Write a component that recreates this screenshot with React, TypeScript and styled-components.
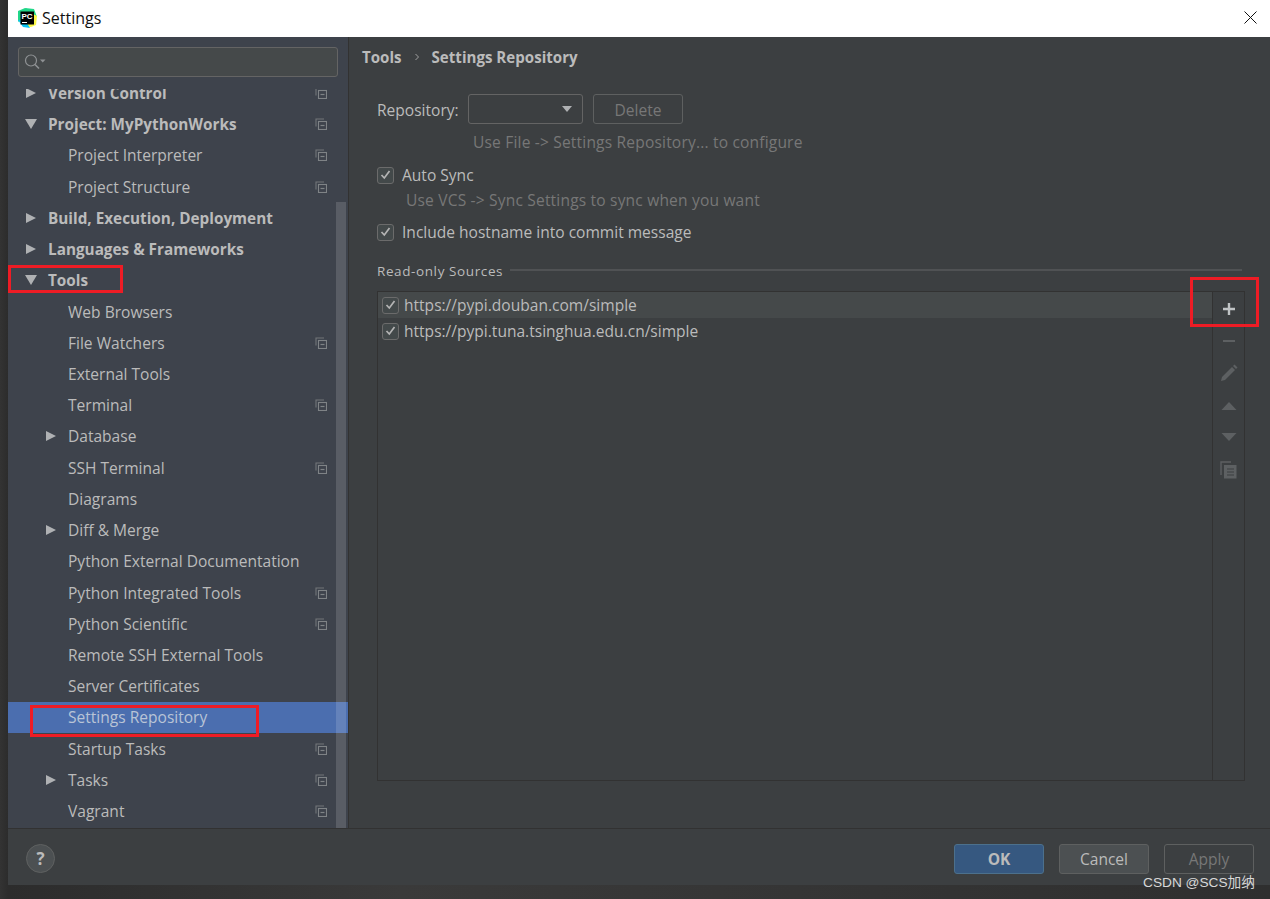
import React from 'react'
import styled, { createGlobalStyle } from 'styled-components'

const GlobalStyle = createGlobalStyle`
    html, body {
        margin: 0;
        padding: 0;
        background: #2e2e2e;
        font-family: "Open Sans", "Noto Sans", sans-serif;
    }
`

const Page = styled.div`
    position: relative;
    width: 1270px;
    height: 899px;
    overflow: hidden;
    padding-left: 8px;
    box-sizing: border-box;
    background: linear-gradient(90deg, #333 0, #2c2c2c 8px, #3a3a3a 400px, #2f2f2f 100%);
`

const Window = styled.div`
    display: flex;
    flex-direction: column;
    height: 885px;
    background: #3c3f41;
`

const TitleBar = styled.div`
    display: flex;
    align-items: center;
    height: 37px;
    flex: none;
    padding: 0 13px 2px 9px;
    box-sizing: border-box;
    background: #fff;
    color: #111;
    font-size: 16px;
`

const TitleText = styled.span`
    margin-left: 5px;
    flex: 1;
`

const Main = styled.div`
    display: flex;
    flex: 1;
    min-height: 0;
`

const Sidebar = styled.div`
    position: relative;
    width: 340px;
    flex: none;
    display: flex;
    flex-direction: column;
    background: #3e434c;
    border-bottom: 1px solid #323232;
`

const SearchBox = styled.div`
    display: flex;
    align-items: center;
    height: 28px;
    margin: 10px 10px 12px 10px;
    padding-left: 5px;
    flex: none;
    background: #45494a;
    border: 1px solid #646464;
    border-radius: 3px;
`

const Tree = styled.div`
    flex: 1;
    overflow: hidden;
`

const TreeInner = styled.div`
    margin-top: -11.6px;
`

const Row = styled.div<{ $selected?: boolean; $bold?: boolean; $depth: number }>`
    display: flex;
    align-items: center;
    height: 31.22px;
    padding-left: ${({ $depth }) => ($depth === 0 ? 40 : 60)}px;
    padding-right: 21px;
    background: ${({ $selected }) => ($selected ? '#4b6eaf' : 'transparent')};
    color: ${({ $selected }) => ($selected ? '#b9c4d6' : '#bbbbbb')};
    font-size: ${({ $bold }) => ($bold ? 15.3 : 15.55)}px;
    font-weight: ${({ $bold }) => ($bold ? 700 : 400)};
    position: relative;
    white-space: nowrap;
`

const RowLabel = styled.span`
    flex: 1;
`

const Arrow = styled.span<{ $open?: boolean; $depth: number }>`
    position: absolute;
    left: ${({ $depth }) => ($depth === 0 ? 18 : 38)}px;
    top: 50%;
    transform: translateY(-50%);
    width: 0;
    height: 0;
    ${({ $open }) =>
        $open
            ? `
        margin-left: -1px;
        border-left: 6px solid transparent;
        border-right: 6px solid transparent;
        border-top: 10px solid #afb1b3;
    `
            : `
        border-top: 5.5px solid transparent;
        border-bottom: 5.5px solid transparent;
        border-left: 10px solid #afb1b3;
    `}
`

const ScrollThumb = styled.div`
    position: absolute;
    right: 2px;
    top: 165px;
    bottom: 0;
    width: 10px;
    background: rgba(255, 255, 255, 0.14);
`

const Content = styled.div`
    flex: 1;
    display: flex;
    flex-direction: column;
    padding: 0 25px 0 13px;
    border-left: 1px solid #323232;
    border-bottom: 1px solid #323232;
    min-width: 0;
`

const Breadcrumb = styled.div`
    display: flex;
    align-items: center;
    height: 20px;
    margin-top: 10px;
    color: #bbbbbb;
    font-size: 15.1px;
    font-weight: 700;
`

const Chevron = styled.span`
    margin: 0 12px 0 12px;
    display: flex;
`

const Form = styled.div`
    padding-left: 15px;
    margin-top: 27px;
`

const RepoRow = styled.div`
    display: flex;
    align-items: center;
    height: 30px;
    color: #bbbbbb;
    font-size: 15.55px;
`

const RepoLabel = styled.span`
    width: 91px;
    flex: none;
    padding-top: 2px;
`

const Combo = styled.div`
    width: 115px;
    height: 30px;
    box-sizing: border-box;
    border: 1px solid #646464;
    border-radius: 3px;
    display: flex;
    align-items: center;
    justify-content: flex-end;
    padding-right: 10px;
`

const ComboCaret = styled.span`
    width: 0;
    height: 0;
    border-left: 5.5px solid transparent;
    border-right: 5.5px solid transparent;
    border-top: 6px solid #afb1b3;
`

const GhostButton = styled.div`
    width: 90px;
    height: 30px;
    margin-left: 10px;
    padding-top: 2px;
    box-sizing: border-box;
    border: 1px solid #5e6060;
    border-radius: 3px;
    display: flex;
    align-items: center;
    justify-content: center;
    color: #777777;
`

const Hint = styled.div<{ $indent: number; $top: number }>`
    margin-left: ${({ $indent }) => $indent}px;
    margin-top: ${({ $top }) => $top}px;
    height: 20px;
    line-height: 20px;
    color: #777777;
    font-size: 15.55px;
    letter-spacing: 0.18px;
    white-space: nowrap;
`

const CheckRow = styled.div<{ $top: number }>`
    display: flex;
    align-items: center;
    gap: 8px;
    height: 20px;
    margin-top: ${({ $top }) => $top}px;
    color: #bbbbbb;
    font-size: 15.55px;
`

const CheckBox = styled.span`
    width: 17px;
    height: 17px;
    flex: none;
    box-sizing: border-box;
    border: 1px solid #6b6b6b;
    border-radius: 3px;
    background: #43494a;
    display: flex;
    align-items: center;
    justify-content: center;
`

const SectionTitle = styled.div`
    display: flex;
    align-items: center;
    height: 20px;
    margin-top: 19px;
    color: #bbbbbb;
    font-size: 13.5px;
    letter-spacing: 0.6px;
    white-space: nowrap;
`

const SectionRule = styled.div`
    flex: 1;
    height: 2px;
    margin: 0 3px 2px 7px;
    background: #505254;
`

const ListPanel = styled.div`
    display: flex;
    height: 490px;
    margin-top: 10px;
    box-sizing: border-box;
    border: 1px solid #323232;
`

const SourceList = styled.div`
    flex: 1;
    min-width: 0;
`

const SourceRow = styled.div<{ $active?: boolean }>`
    display: flex;
    align-items: center;
    gap: 5px;
    height: 26px;
    padding-left: 4px;
    background: ${({ $active }) => ($active ? '#45494a' : 'transparent')};
    color: #bbbbbb;
    font-size: 15.55px;
`

const ListToolbar = styled.div`
    width: 31px;
    flex: none;
    display: flex;
    flex-direction: column;
    align-items: center;
    padding-top: 1px;
    border-left: 1px solid #323232;
`

const ToolButton = styled.div<{ $height: number }>`
    height: ${({ $height }) => $height}px;
    display: flex;
    align-items: center;
    justify-content: center;
`

const Footer = styled.div`
    display: flex;
    align-items: center;
    height: 56px;
    flex: none;
    padding: 3px 16px 0 18px;
    box-sizing: border-box;
`

const HelpButton = styled.div`
    width: 29px;
    height: 29px;
    box-sizing: border-box;
    border: 1px solid #5f6161;
    border-radius: 50%;
    background: #4c5052;
    color: #bbbbbb;
    font-size: 17px;
    font-weight: 700;
    display: flex;
    align-items: center;
    justify-content: center;
    margin-right: auto;
`

const DialogButton = styled.div<{ $kind: 'primary' | 'normal' | 'disabled' }>`
    width: 90px;
    height: 30px;
    margin-left: 15px;
    box-sizing: border-box;
    border-radius: 3px;
    display: flex;
    align-items: center;
    justify-content: center;
    font-size: 15.55px;
    font-weight: ${({ $kind }) => ($kind === 'primary' ? 700 : 400)};
    color: ${({ $kind }) => ($kind === 'disabled' ? '#777777' : '#bbbbbb')};
    border: 1px solid ${({ $kind }) => ($kind === 'primary' ? '#4c708c' : '#5e6060')};
    background: ${({ $kind }) =>
        $kind === 'primary' ? '#365880' : $kind === 'normal' ? '#4c5052' : 'transparent'};
`

const RedMark = styled.div<{ $x: number; $y: number; $w: number; $h: number }>`
    position: absolute;
    left: ${({ $x }) => $x}px;
    top: ${({ $y }) => $y}px;
    width: ${({ $w }) => $w}px;
    height: ${({ $h }) => $h}px;
    box-sizing: border-box;
    border: 3px solid #ee1c25;
    pointer-events: none;
`

const Watermark = styled.div`
    position: absolute;
    right: 15px;
    bottom: 8px;
    color: #d8d8d8;
    font-size: 13.7px;
    font-family: "Liberation Sans", "Noto Sans CJK SC", sans-serif;
    white-space: nowrap;
`

const rows = [
    { label: 'Version Control', depth: 0, bold: true, arrow: 'closed', copy: true },
    { label: 'Project: MyPythonWorks', depth: 0, bold: true, arrow: 'open', copy: true },
    { label: 'Project Interpreter', depth: 1, copy: true },
    { label: 'Project Structure', depth: 1, copy: true },
    { label: 'Build, Execution, Deployment', depth: 0, bold: true, arrow: 'closed' },
    { label: 'Languages & Frameworks', depth: 0, bold: true, arrow: 'closed' },
    { label: 'Tools', depth: 0, bold: true, arrow: 'open' },
    { label: 'Web Browsers', depth: 1 },
    { label: 'File Watchers', depth: 1, copy: true },
    { label: 'External Tools', depth: 1 },
    { label: 'Terminal', depth: 1, copy: true },
    { label: 'Database', depth: 1, arrow: 'closed' },
    { label: 'SSH Terminal', depth: 1, copy: true },
    { label: 'Diagrams', depth: 1 },
    { label: 'Diff & Merge', depth: 1, arrow: 'closed' },
    { label: 'Python External Documentation', depth: 1 },
    { label: 'Python Integrated Tools', depth: 1, copy: true },
    { label: 'Python Scientific', depth: 1, copy: true },
    { label: 'Remote SSH External Tools', depth: 1 },
    { label: 'Server Certificates', depth: 1 },
    { label: 'Settings Repository', depth: 1, selected: true },
    { label: 'Startup Tasks', depth: 1, copy: true },
    { label: 'Tasks', depth: 1, arrow: 'closed', copy: true },
    { label: 'Vagrant', depth: 1, copy: true },
]

function Logo() {
    return (
        <svg width="20" height="20" viewBox="0 0 20 20">
            <polygon points="1,3 8,0 13,2 7,9 1,14" fill="#21d789" />
            <polygon points="8,0 17,1 20,9 13,9" fill="#21d789" />
            <polygon points="14,5 20,8 19,17 14,19 9,19" fill="#fcf84a" />
            <polygon points="1,12 6,19 13,20 8,12" fill="#07c3f2" />
            <rect x="3.5" y="3.5" width="13.5" height="13" fill="#000" />
            <text x="4.5" y="10.8" fontSize="8" fontWeight="700" fill="#fff" fontFamily="Liberation Sans">
                PC
            </text>
            <rect x="5" y="14" width="5" height="1" fill="#fff" />
        </svg>
    )
}

function CloseIcon() {
    return (
        <svg width="13" height="13" viewBox="0 0 13 13">
            <path d="M0.5 0.5L12.5 12.5M12.5 0.5L0.5 12.5" stroke="#111" strokeWidth="1" fill="none" />
        </svg>
    )
}

function SearchIcon() {
    return (
        <svg width="22" height="16" viewBox="0 0 22 16">
            <circle cx="7" cy="6.5" r="5.5" stroke="#8f9294" strokeWidth="1.2" fill="none" />
            <path d="M11 10.5L15 14.5" stroke="#8f9294" strokeWidth="1.6" />
            <path d="M16 5.5h5.5l-2.75 3z" fill="#8f9294" />
        </svg>
    )
}

function CopyMark({ color = '#7f8386', size = 12 }: { color?: string; size?: number }) {
    return (
        <svg width={size} height={size} viewBox="0 0 12 12">
            <path d="M1 8.5V1h8" stroke={color} strokeWidth="1.1" fill="none" opacity="0.8" />
            <rect x="3.5" y="3.5" width="8" height="8" stroke={color} strokeWidth="1.1" fill="none" />
            <path d="M5.5 7.5h4" stroke={color} strokeWidth="1.2" />
        </svg>
    )
}

function Check() {
    return (
        <svg width="11" height="10" viewBox="0 0 11 10">
            <path d="M1.5 5l2.8 3L9.5 1" stroke="#b4b4b4" strokeWidth="1.7" fill="none" />
        </svg>
    )
}

export default function App() {
    return (
        <Page>
            <GlobalStyle />
            <Window>
                <TitleBar>
                    <Logo />
                    <TitleText>Settings</TitleText>
                    <CloseIcon />
                </TitleBar>
                <Main>
                    <Sidebar>
                        <SearchBox>
                            <SearchIcon />
                        </SearchBox>
                        <Tree>
                            <TreeInner>
                                {rows.map(row => (
                                    <Row
                                        key={row.label}
                                        $depth={row.depth}
                                        $bold={row.bold}
                                        $selected={row.selected}
                                    >
                                        {row.arrow && <Arrow $open={row.arrow === 'open'} $depth={row.depth} />}
                                        <RowLabel>{row.label}</RowLabel>
                                        {row.copy && <CopyMark />}
                                    </Row>
                                ))}
                            </TreeInner>
                        </Tree>
                        <ScrollThumb />
                    </Sidebar>
                    <Content>
                        <Breadcrumb>
                            Tools
                            <Chevron>
                                <svg width="6" height="8" viewBox="0 0 6 8">
                                    <path d="M1.5 1l3 3-3 3" stroke="#a0a0a0" strokeWidth="1" fill="none" />
                                </svg>
                            </Chevron>
                            Settings Repository
                        </Breadcrumb>
                        <Form>
                            <RepoRow>
                                <RepoLabel>Repository:</RepoLabel>
                                <Combo>
                                    <ComboCaret />
                                </Combo>
                                <GhostButton>Delete</GhostButton>
                            </RepoRow>
                            <Hint $indent={96} $top={8}>
                                Use File -&gt; Settings Repository... to configure
                            </Hint>
                            <CheckRow $top={13}>
                                <CheckBox>
                                    <Check />
                                </CheckBox>
                                Auto Sync
                            </CheckRow>
                            <Hint $indent={29} $top={5}>
                                Use VCS -&gt; Sync Settings to sync when you want
                            </Hint>
                            <CheckRow $top={12}>
                                <CheckBox>
                                    <Check />
                                </CheckBox>
                                Include hostname into commit message
                            </CheckRow>
                            <SectionTitle>
                                Read-only Sources
                                <SectionRule />
                            </SectionTitle>
                            <ListPanel>
                                <SourceList>
                                    <SourceRow $active>
                                        <CheckBox>
                                            <Check />
                                        </CheckBox>
                                        https://pypi.douban.com/simple
                                    </SourceRow>
                                    <SourceRow>
                                        <CheckBox>
                                            <Check />
                                        </CheckBox>
                                        https://pypi.tuna.tsinghua.edu.cn/simple
                                    </SourceRow>
                                </SourceList>
                                <ListToolbar>
                                    <ToolButton $height={32}>
                                        <svg width="14" height="14" viewBox="0 0 14 14">
                                            <path d="M7 1v12M1 7h12" stroke="#c0c3c5" strokeWidth="2.4" />
                                        </svg>
                                    </ToolButton>
                                    <ToolButton $height={32}>
                                        <svg width="14" height="14" viewBox="0 0 14 14">
                                            <path d="M1 7h12" stroke="#5d6062" strokeWidth="2" />
                                        </svg>
                                    </ToolButton>
                                    <ToolButton $height={32}>
                                        <svg width="18" height="18" viewBox="0 0 18 18">
                                            <path d="M1 17l1-4L12 3l3 3L5 16z" fill="#5d6062" />
                                            <path d="M13 2l1.5-1.5 3 3L16 5z" fill="#5d6062" />
                                        </svg>
                                    </ToolButton>
                                    <ToolButton $height={33}>
                                        <svg width="16" height="8" viewBox="0 0 16 8">
                                            <path d="M8 0l7.5 8H.5z" fill="#5d6062" />
                                        </svg>
                                    </ToolButton>
                                    <ToolButton $height={30}>
                                        <svg width="16" height="8" viewBox="0 0 16 8">
                                            <path d="M.5 0h15L8 8z" fill="#5d6062" />
                                        </svg>
                                    </ToolButton>
                                    <ToolButton $height={35}>
                                        <svg width="17" height="18" viewBox="0 0 17 18">
                                            <path d="M1 14V1h10" stroke="#5d6062" strokeWidth="1.4" fill="none" />
                                            <rect x="4" y="4" width="12.5" height="13.5" fill="#5d6062" />
                                            <path d="M7 8h7M7 11h7M7 14h7" stroke="#3c3f41" strokeWidth="1" />
                                        </svg>
                                    </ToolButton>
                                </ListToolbar>
                            </ListPanel>
                        </Form>
                    </Content>
                </Main>
                <Footer>
                    <HelpButton>?</HelpButton>
                    <DialogButton $kind="primary">OK</DialogButton>
                    <DialogButton $kind="normal">Cancel</DialogButton>
                    <DialogButton $kind="disabled">Apply</DialogButton>
                </Footer>
            </Window>
            <RedMark $x={8} $y={265} $w={115} $h={28} />
            <RedMark $x={30} $y={705} $w={229} $h={32} />
            <RedMark $x={1190} $y={277} $w={69} $h={50} />
            <Watermark>CSDN @SCS加纳</Watermark>
        </Page>
    )
}
